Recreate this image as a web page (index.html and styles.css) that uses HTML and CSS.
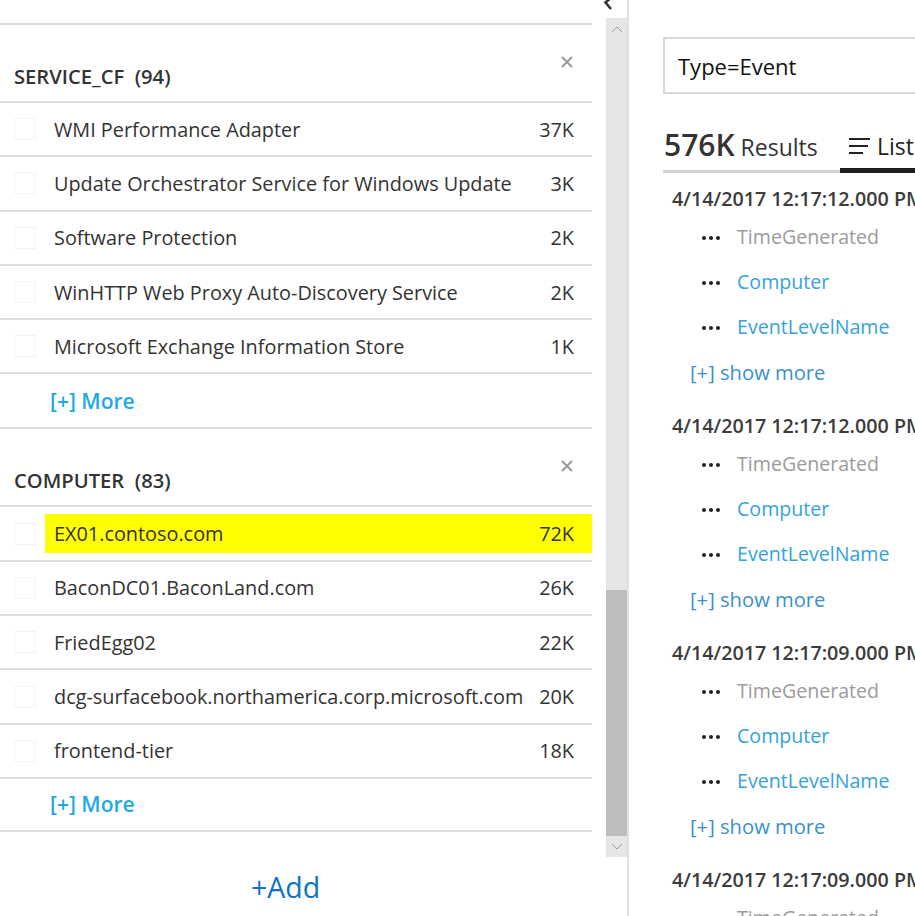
FILE: index.html
```html
<!DOCTYPE html>
<html>
<head>
<meta charset="utf-8">
<link rel="stylesheet" href="styles.css">
</head>
<body>
<div class="app">
  <div class="left">
    <div class="left-top">
      <svg class="collapse" width="12" height="12" viewBox="0 0 12 12"><path d="M10 -4 L2.5 2.5 L8 9" fill="none" stroke="#333" stroke-width="2.6"/></svg>
    </div>
    <div class="left-body">
      <div class="facets">
        <div class="facet">
          <div class="facet-head">
            <span class="facet-title">SERVICE_CF&nbsp; (94)</span>
            <svg class="close" width="12" height="12" viewBox="0 0 12 12"><path d="M1 1 L11 11 M11 1 L1 11" stroke="#9b9b9b" stroke-width="2"/></svg>
          </div>
          <div class="row"><span class="cb"></span><div class="val"><span>WMI Performance Adapter</span><span>37K</span></div></div>
          <div class="row"><span class="cb"></span><div class="val"><span>Update Orchestrator Service for Windows Update</span><span>3K</span></div></div>
          <div class="row"><span class="cb"></span><div class="val"><span>Software Protection</span><span>2K</span></div></div>
          <div class="row"><span class="cb"></span><div class="val"><span>WinHTTP Web Proxy Auto-Discovery Service</span><span>2K</span></div></div>
          <div class="row"><span class="cb"></span><div class="val"><span>Microsoft Exchange Information Store</span><span>1K</span></div></div>
          <div class="more-row"><span class="more">[+] More</span></div>
        </div>
        <div class="facet last">
          <div class="facet-head">
            <span class="facet-title">COMPUTER&nbsp; (83)</span>
            <svg class="close" width="12" height="12" viewBox="0 0 12 12"><path d="M1 1 L11 11 M11 1 L1 11" stroke="#9b9b9b" stroke-width="2"/></svg>
          </div>
          <div class="row"><span class="cb"></span><div class="val hl"><span>EX01.contoso.com</span><span>72K</span></div></div>
          <div class="row"><span class="cb"></span><div class="val"><span>BaconDC01.BaconLand.com</span><span>26K</span></div></div>
          <div class="row"><span class="cb"></span><div class="val"><span>FriedEgg02</span><span>22K</span></div></div>
          <div class="row"><span class="cb"></span><div class="val"><span>dcg-surfacebook.northamerica.corp.microsoft.com</span><span>20K</span></div></div>
          <div class="row"><span class="cb"></span><div class="val"><span>frontend-tier</span><span>18K</span></div></div>
          <div class="more-row"><span class="more">[+] More</span></div>
        </div>
      </div>
      <div class="scrollbar">
        <div class="sb-btn"><svg width="12" height="8" viewBox="0 0 12 8"><path d="M1 7 L6 2 L11 7" fill="none" stroke="#9a9a9a" stroke-width="1"/></svg></div>
        <div class="sb-track"><div class="sb-thumb"></div></div>
        <div class="sb-btn"><svg width="12" height="8" viewBox="0 0 12 8"><path d="M1 1 L6 6 L11 1" fill="none" stroke="#9a9a9a" stroke-width="1"/></svg></div>
      </div>
    </div>
    <div class="left-foot"><span class="add">+Add</span></div>
  </div>
  <div class="right">
    <div class="search">Type=Event</div>
    <div class="tabs">
      <div class="count"><span class="num">576K</span> <span class="lbl">Results</span></div>
      <div class="tab-list">
        <svg width="22" height="18" viewBox="0 0 22 18"><path d="M0 2 H21 M0 9 H19 M0 16 H14" stroke="#222" stroke-width="2"/></svg>
        <span>List</span>
      </div>
    </div>
    <div class="entries">
      <div class="entry">
        <div class="date">4/14/2017 12:17:12.000 PM</div>
        <div class="field"><span class="dots"><i></i><i></i><i></i></span><span class="fname gray">TimeGenerated</span></div>
        <div class="field"><span class="dots"><i></i><i></i><i></i></span><span class="fname">Computer</span></div>
        <div class="field"><span class="dots"><i></i><i></i><i></i></span><span class="fname">EventLevelName</span></div>
        <div class="showmore">[+] show more</div>
      </div>
      <div class="entry">
        <div class="date">4/14/2017 12:17:12.000 PM</div>
        <div class="field"><span class="dots"><i></i><i></i><i></i></span><span class="fname gray">TimeGenerated</span></div>
        <div class="field"><span class="dots"><i></i><i></i><i></i></span><span class="fname">Computer</span></div>
        <div class="field"><span class="dots"><i></i><i></i><i></i></span><span class="fname">EventLevelName</span></div>
        <div class="showmore">[+] show more</div>
      </div>
      <div class="entry">
        <div class="date">4/14/2017 12:17:09.000 PM</div>
        <div class="field"><span class="dots"><i></i><i></i><i></i></span><span class="fname gray">TimeGenerated</span></div>
        <div class="field"><span class="dots"><i></i><i></i><i></i></span><span class="fname">Computer</span></div>
        <div class="field"><span class="dots"><i></i><i></i><i></i></span><span class="fname">EventLevelName</span></div>
        <div class="showmore">[+] show more</div>
      </div>
      <div class="entry">
        <div class="date">4/14/2017 12:17:09.000 PM</div>
        <div class="field"><span class="dots"><i></i><i></i><i></i></span><span class="fname gray">TimeGenerated</span></div>
      </div>
    </div>
  </div>
</div>
</body>
</html>
```
FILE: styles.css
```css
* { box-sizing: border-box; }
html, body { margin: 0; padding: 0; background: #fff; }
body {
  width: 915px; height: 916px; overflow: hidden;
  font-family: "Open Sans", "Noto Sans", sans-serif;
  color: #333;
}
.app { display: flex; height: 916px; }

.left {
  width: 629px; flex: none;
  border-right: 2px solid #e1e1e1;
  display: flex; flex-direction: column;
}
.left-top { height: 18px; position: relative; }
.collapse { position: absolute; left: 603px; top: 0; }
.left-body { display: flex; height: 839px; }
.facets { width: 606px; padding: 5px 14px 0 0; overflow: hidden; }

.facet-head {
  height: 78px; border-top: 2px solid #dedede;
  display: flex; align-items: flex-end; justify-content: space-between;
  padding: 0 19px 13px 14px;
}
.facet-title { font-size: 20.2px; font-weight: 600; color: #333; line-height: 24px; white-space: nowrap; }
.close { margin-bottom: 20px; }

.row {
  height: 54.3px; border-top: 2px solid #dedede;
  display: flex; align-items: center;
}
.cb {
  width: 22px; height: 22px; margin-left: 14px; margin-right: 9px;
  border: 1px solid #f4f4f4; flex: none;
}
.val {
  flex: 1; height: 39px; display: flex; align-items: center; justify-content: space-between;
  padding: 0 18px 0 9px; font-size: 19.85px; color: #333; white-space: nowrap;
}
.val.hl { background: #ffff00; }

.more-row { height: 55px; border-top: 2px solid #dedede; display: flex; align-items: center; padding-left: 50px; }
.facet.last .more-row { border-bottom: 2px solid #dedede; }
.more { color: #1caae6; font-weight: 600; font-size: 21px; }

.scrollbar { width: 21px; background: #e6e6e6; display: flex; flex-direction: column; }
.sb-btn { height: 21px; display: flex; align-items: center; justify-content: center; }
.sb-track { flex: 1; display: flex; flex-direction: column; justify-content: flex-end; }
.sb-thumb { height: 246px; background: #bdbdbd; }

.left-foot { flex: 1; display: flex; align-items: center; padding-left: 251px; }
.add { color: #0e72c6; font-size: 28.5px; line-height: 30px; }

.right { flex: 1; padding: 37px 0 0 34px; overflow: hidden; }
.search {
  width: 300px; height: 57px; border: 2px solid #d8d8d8; border-right: none;
  font-size: 22px; color: #111; display: flex; align-items: center; padding-left: 13px;
}
.tabs { margin-top: 31px; display: flex; align-items: flex-end; height: 48px; width: 300px; }
.count {
  width: 177px; height: 48px; border-bottom: 3px solid #d4d4d4;
  display: flex; align-items: baseline; padding-left: 1px; white-space: nowrap;
}
.num { font-size: 30px; font-weight: 600; color: #333; line-height: 40px; }
.lbl { font-size: 23px; color: #333; margin-left: 6px; }
.tab-list {
  flex: 1; height: 48px; border-bottom: 5px solid #1e1e1e;
  display: flex; align-items: center; padding-left: 9px; gap: 6px; padding-bottom: 2px;
}
.tab-list span { font-size: 23px; color: #222; }

.entries { padding-top: 9px; }
.entry { margin-bottom: 15px; white-space: nowrap; }
.date { height: 32px; display: flex; align-items: center; padding-left: 9px; font-size: 19.7px; font-weight: 600; color: #3c3c3c; }
.field { height: 45px; display: flex; align-items: center; padding-left: 39px; }
.dots { width: 35px; display: flex; gap: 3px; align-items: center; padding-top: 3px; }
.dots i { display: block; width: 4px; height: 4px; border-radius: 50%; background: #222; }
.fname { font-size: 19.6px; color: #35a3da; }
.fname.gray { color: #9b9b9b; }
.showmore { height: 45px; display: flex; align-items: center; padding-left: 27px; font-size: 20.2px; color: #3a8fd3; }
```
